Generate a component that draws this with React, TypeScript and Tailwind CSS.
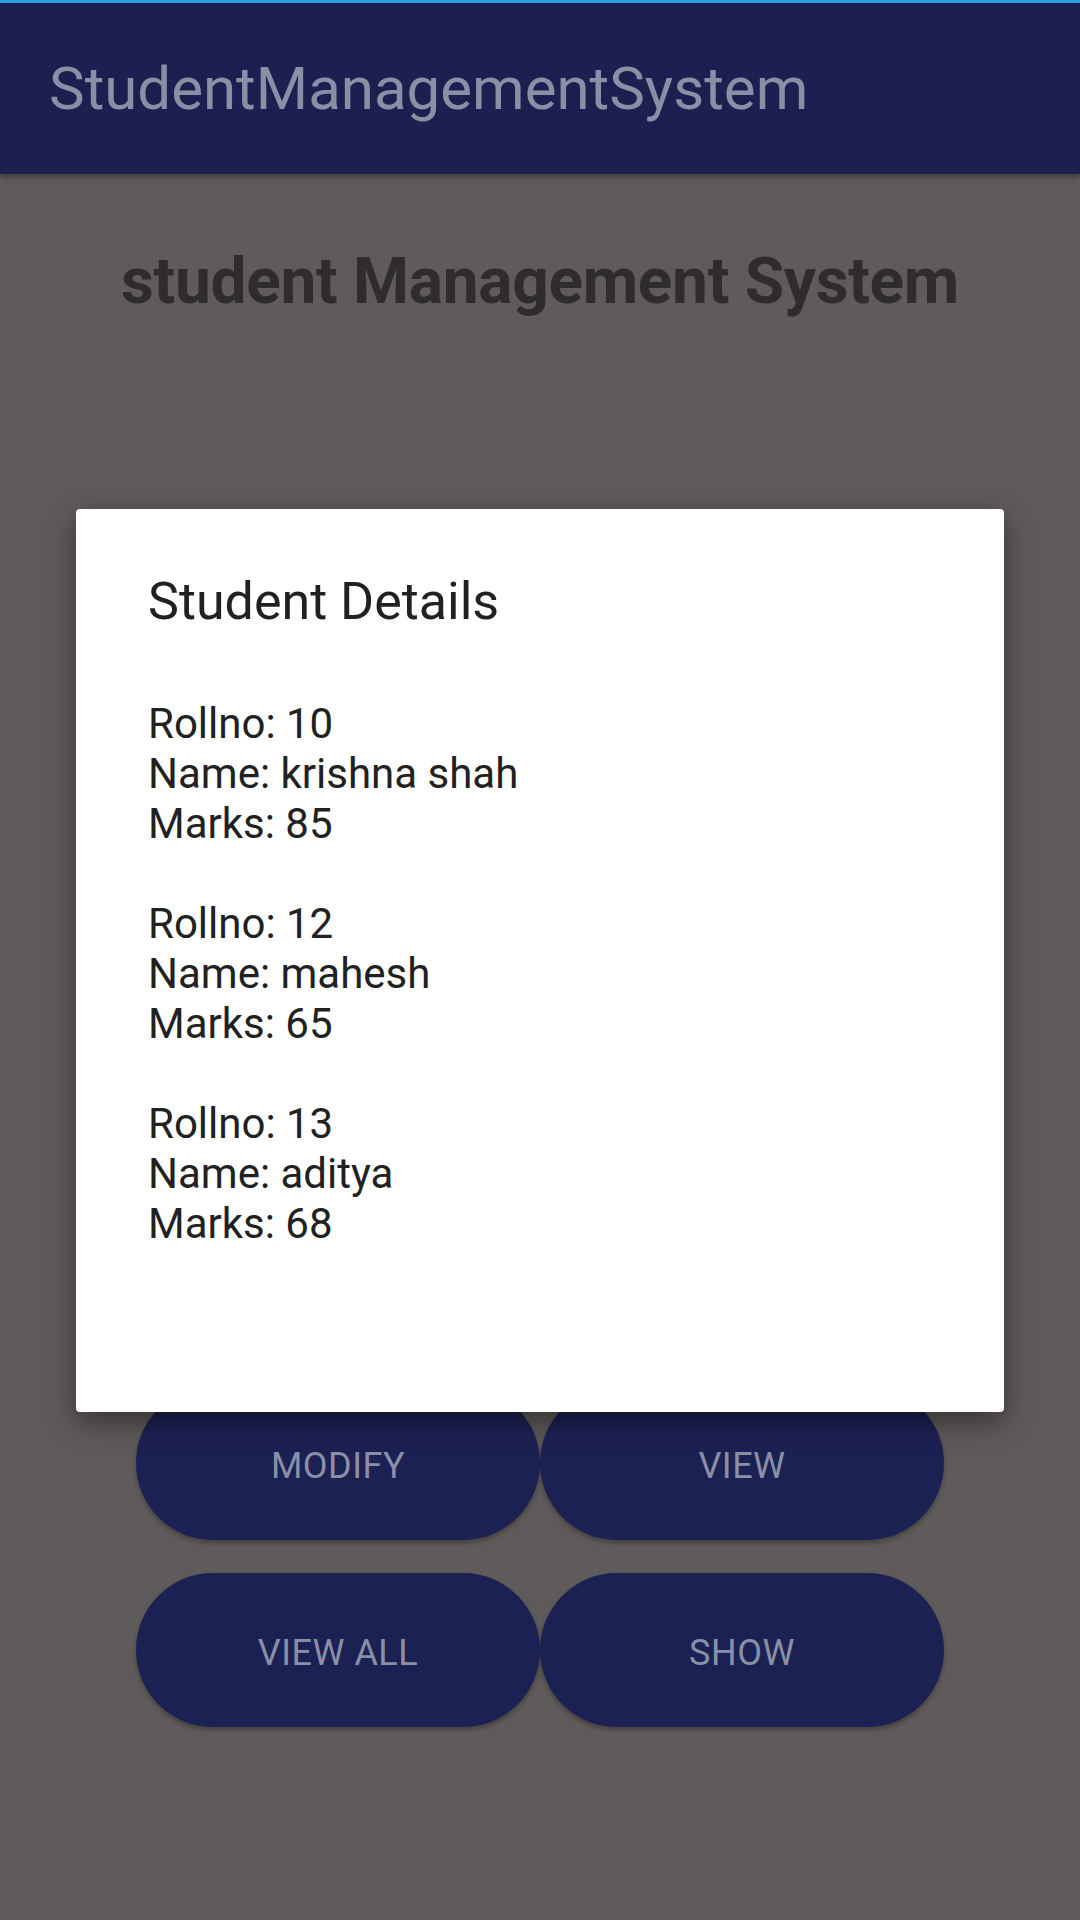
export default function App() {
  const students = [
    { roll: 10, name: "krishna shah", marks: 85 },
    { roll: 12, name: "mahesh", marks: 65 },
    { roll: 13, name: "aditya", marks: 68 },
  ];

  return (
    <div className="relative w-[1080px] h-[1920px] overflow-hidden bg-[#5f5b5a] font-['Roboto',sans-serif]">
      {/* app bar */}
      <div className="h-[174px] bg-[#1b2050] border-t-[3px] border-[#2a9fe0] flex items-center pl-[49px] shadow-[0_3px_6px_rgba(0,0,0,0.35)]">
        <span className="text-[60px] leading-none text-[#8a8fa6]">StudentManagementSystem</span>
      </div>

      <h1 className="mt-[71px] text-center text-[64px] leading-[74px] font-bold text-[#2e2c2c] tracking-[-0.3px]">
        student Management System
      </h1>

      {/* buttons (mostly under the dialog) */}
      <div className="mt-[1067px] ml-[136px] w-[808px] grid grid-cols-2 gap-y-[33px]">
        {["MODIFY", "VIEW", "VIEW ALL", "SHOW"].map((b) => (
          <div
            key={b}
            className="h-[154px] pt-[6px] rounded-full bg-[#1c2153] flex items-center justify-center text-[36px] text-[#8a8fa6] tracking-[0.5px] shadow-[0_3px_5px_rgba(0,0,0,0.3)]"
          >
            {b}
          </div>
        ))}
      </div>

      {/* dialog */}
      <div className="absolute left-[76px] top-[509px] w-[928px] h-[903px] bg-white rounded-[4px] shadow-[0_10px_30px_rgba(0,0,0,0.45)] pl-[72px] pt-[63px]">
        <div className="text-[52px] leading-[60px] text-[#212121]">Student Details</div>
        <div className="mt-[67px] text-[42px] leading-[50px] text-[#212121]">
          {students.map((s, i) => (
            <div key={s.roll} className={i > 0 ? "mt-[50px]" : ""}>
              <div>Rollno: {s.roll}</div>
              <div>Name: {s.name}</div>
              <div>Marks: {s.marks}</div>
            </div>
          ))}
        </div>
      </div>
    </div>
  );
}
